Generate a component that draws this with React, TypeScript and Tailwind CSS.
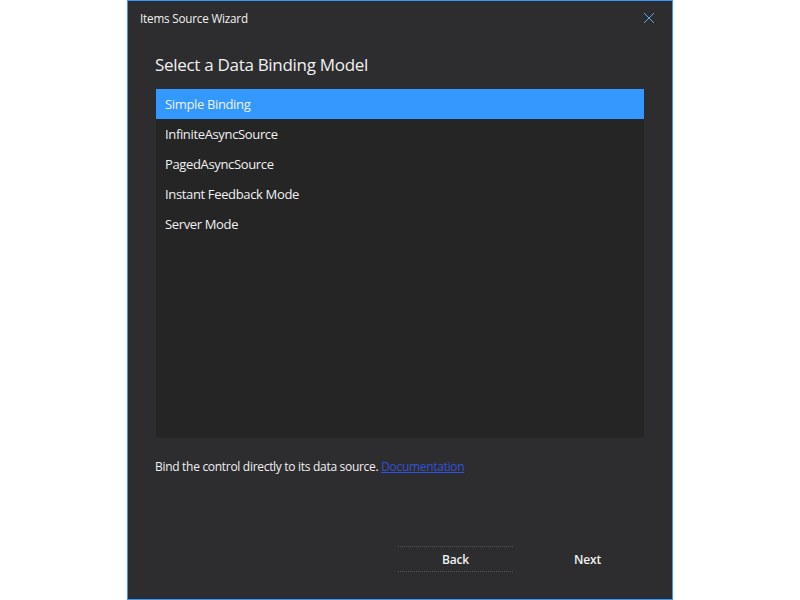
const items = ['Simple Binding', 'InfiniteAsyncSource', 'PagedAsyncSource', 'Instant Feedback Mode', 'Server Mode']

function IconClose() {
  return (
    <svg className="size-[12px]" viewBox="0 0 12 12" fill="none" aria-hidden>
      <path d="M1 1l10 10M11 1L1 11" stroke="#5aa7f0" strokeWidth={1} />
    </svg>
  )
}

export default function App() {
  return (
    <div className="flex h-[600px] w-[800px] justify-center bg-white font-['Open_Sans',sans-serif] text-[#f1f1f1]">
      <div className="flex h-[600px] w-[546px] flex-col border border-[#3399ff] bg-[#2d2d30]">
        <div className="flex h-[34px] shrink-0 items-center justify-between pl-[12px] pr-[17px]">
          <span className="text-[11.7px] leading-4 tracking-[-0.2px]">Items Source Wizard</span>
          <IconClose />
        </div>

        <div className="flex min-h-0 flex-1 flex-col pl-[27px] pr-[28px]">
          <h1 className="mt-[18px] text-[17px] leading-6 tracking-[-0.3px]">Select a Data Binding Model</h1>

          <ul className="ml-[1px] mt-[12px] h-[349px] shrink-0 bg-[#252526]">
            {items.map((item, i) => (
              <li
                key={item}
                className={`flex h-[30px] items-center px-[9px] pt-[1px] text-[13px] tracking-[-0.35px] ${i === 0 ? 'bg-[#3399ff]' : ''}`}
              >
                {item}
              </li>
            ))}
          </ul>

          <p className="mt-[21px] text-[12px] leading-4 tracking-[-0.3px]">
            Bind the control directly to its data source.{' '}
            <a href="#" className="text-[#2f52d8] underline">
              Documentation
            </a>
          </p>

          <div className="-mr-[1px] mb-[27px] mt-auto flex justify-end gap-[17px]">
            <button
              type="button"
              className="h-[26px] w-[115px] border-y border-dotted border-[#56565a] pt-[1px] text-[12px] font-semibold tracking-[-0.2px]"
            >
              Back
            </button>
            <button type="button" className="h-[26px] w-[115px] pt-[1px] text-[12px] font-semibold tracking-[-0.2px]">
              Next
            </button>
          </div>
        </div>
      </div>
    </div>
  )
}
